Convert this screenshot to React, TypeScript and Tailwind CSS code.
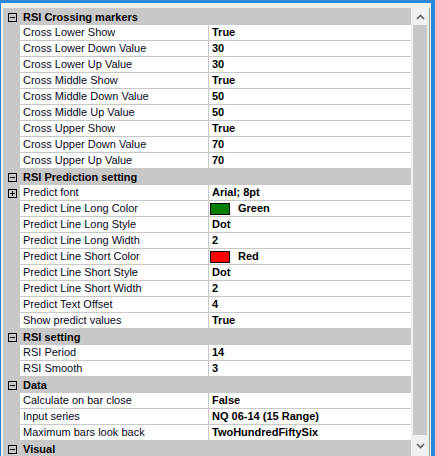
import React from "react";

type Row = { label: string; value: string; swatch?: string; expand?: boolean };
type Section = { title: string; rows: Row[] };

const sections: Section[] = [
  {
    title: "RSI Crossing markers",
    rows: [
      { label: "Cross Lower Show", value: "True" },
      { label: "Cross Lower Down Value", value: "30" },
      { label: "Cross Lower Up Value", value: "30" },
      { label: "Cross Middle Show", value: "True" },
      { label: "Cross Middle Down Value", value: "50" },
      { label: "Cross Middle Up Value", value: "50" },
      { label: "Cross Upper Show", value: "True" },
      { label: "Cross Upper Down Value", value: "70" },
      { label: "Cross Upper Up Value", value: "70" },
    ],
  },
  {
    title: "RSI Prediction setting",
    rows: [
      { label: "Predict font", value: "Arial; 8pt", expand: true },
      { label: "Predict Line Long Color", value: "Green", swatch: "#008000" },
      { label: "Predict Line Long Style", value: "Dot" },
      { label: "Predict Line Long Width", value: "2" },
      { label: "Predict Line Short Color", value: "Red", swatch: "#ff0000" },
      { label: "Predict Line Short Style", value: "Dot" },
      { label: "Predict Line Short Width", value: "2" },
      { label: "Predict Text Offset", value: "4" },
      { label: "Show predict values", value: "True" },
    ],
  },
  {
    title: "RSI setting",
    rows: [
      { label: "RSI Period", value: "14" },
      { label: "RSI Smooth", value: "3" },
    ],
  },
  {
    title: "Data",
    rows: [
      { label: "Calculate on bar close", value: "False" },
      { label: "Input series", value: "NQ 06-14 (15 Range)" },
      { label: "Maximum bars look back", value: "TwoHundredFiftySix" },
    ],
  },
  { title: "Visual", rows: [] },
];

function Box({ plus }: { plus?: boolean }) {
  return (
    <div className="relative w-[9px] h-[9px] border border-black">
      <div className="absolute left-[1px] top-[3px] w-[5px] h-[1px] bg-black" />
      {plus && <div className="absolute left-[3px] top-[1px] w-[1px] h-[5px] bg-black" />}
    </div>
  );
}

export default function App() {
  return (
    <div
      className="w-[435px] h-[456px] bg-[#2b88d8] pt-[3px] pl-[1px] pr-[4px] overflow-hidden"
      style={{ fontFamily: '"Liberation Sans", Arial, sans-serif' }}
    >
      <div className="h-[453px] bg-[#f0f0f0] pt-[5px] pl-[2px] flex overflow-hidden">
        <div className="w-[408px] flex flex-col border-t border-[#c8c8c8]">
          {sections.map((s) => (
            <React.Fragment key={s.title}>
              <div className="h-[16px] shrink-0 bg-[#c8c8c8] flex items-center">
                <div className="w-[17px] flex justify-center pl-[1px]">
                  <Box />
                </div>
                <div className="pl-[3px] text-[11px] leading-[15px] font-bold text-black">{s.title}</div>
              </div>
              {s.rows.map((r) => (
                <div key={r.label} className="h-[16px] shrink-0 flex">
                  <div className="w-[17px] bg-[#c8c8c8] flex items-center justify-center pl-[1px]">
                    {r.expand && <Box plus />}
                  </div>
                  <div className="w-[189px] bg-white border-r border-b border-[#c8c8c8] pl-[3px] text-[11px] leading-[15px] text-[#0a0a1e] whitespace-nowrap overflow-hidden">
                    {r.label}
                  </div>
                  <div className="w-[202px] bg-white border-b border-[#c8c8c8] flex items-center text-[11px] leading-[15px] font-bold text-black whitespace-nowrap">
                    {r.swatch ? (
                      <>
                        <div
                          className="ml-[1px] w-[20px] h-[12px] border border-black"
                          style={{ backgroundColor: r.swatch }}
                        />
                        <span className="ml-[8px]">{r.value}</span>
                      </>
                    ) : (
                      <span className="pl-[3px]">{r.value}</span>
                    )}
                  </div>
                </div>
              ))}
            </React.Fragment>
          ))}
        </div>
        <div className="ml-[1px] w-[16px] flex flex-col">
          <div className="h-[17px] flex items-center justify-center">
            <svg width="9" height="6" viewBox="0 0 9 6">
              <polyline points="1,5 4.5,1.5 8,5" fill="none" stroke="#606060" strokeWidth="1.6" />
            </svg>
          </div>
          <div className="h-[410px] bg-[#c8c8c8] mx-[1px]" />
          <div className="flex-1 flex items-center justify-center">
            <svg width="9" height="6" viewBox="0 0 9 6">
              <polyline points="1,1 4.5,4.5 8,1" fill="none" stroke="#606060" strokeWidth="1.6" />
            </svg>
          </div>
        </div>
        <div className="w-[3px] flex">
          <div className="w-[1px]" />
          <div className="w-[1px] bg-[#a0a0a0]" />
        </div>
      </div>
    </div>
  );
}
